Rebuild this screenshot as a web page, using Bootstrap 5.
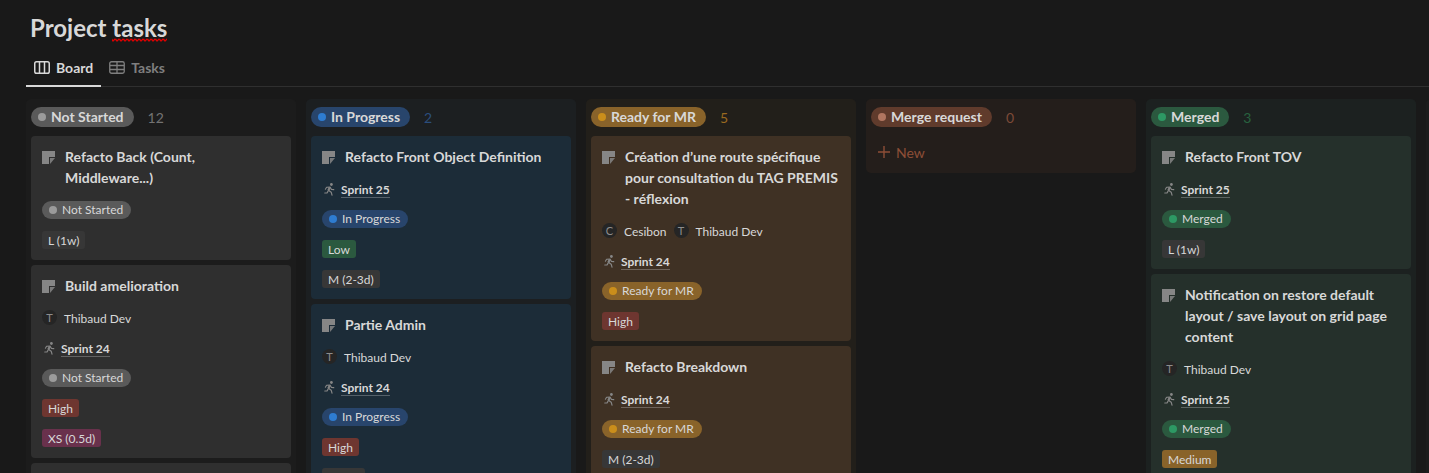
<!DOCTYPE html>
<html lang="en" data-bs-theme="dark">
<head>
<meta charset="utf-8">
<meta name="viewport" content="width=device-width, initial-scale=1">
<title>Project tasks</title>
<link href="https://cdn.jsdelivr.net/npm/bootstrap@5.3.0/dist/css/bootstrap.min.css" rel="stylesheet">
<style>
  body { background: #191919; color: #d8d8d8; font-family: Lato, "Liberation Sans", sans-serif; font-size: 14px; line-height: 21px; height: 100vh; overflow: hidden; }
  h1 { font-size: 24px; line-height: 32px; font-weight: 700; color: #d8d8d8; padding: 12px 30px 0; }
  .typo { background: url("data:image/svg+xml,%3Csvg xmlns='http://www.w3.org/2000/svg' width='4' height='4'%3E%3Cpath d='M-1 0 1 3 3 1 5 3' fill='none' stroke='%23e00000' stroke-width='1.2'/%3E%3C/svg%3E") repeat-x left bottom; }
  .views { margin-left: 26px; height: 43px; border-bottom: 1px solid #2f2f2f; }
  .views .nav-link { display: flex; align-items: center; gap: 6px; height: 43px; padding: 3px 8px 0; color: #7f7f7f; font-weight: 700; }
  .views .nav-link.active { color: #d8d8d8; border-bottom: 2px solid #d8d8d8; padding-top: 5px; }
  .board { padding: 12px 0 0 26px; gap: 10px; overflow: hidden; }
  .lane { flex: 0 0 270px; padding: 8px 5px 5px; border-radius: 5px; background: var(--lane); }
  .lane-head { height: 20px; margin-bottom: 9px; gap: 14px; font-size: 14px; color: var(--num); }
  .lane-head h2 { font-size: 14px; line-height: 20px; font-weight: 700; padding: 0 9px 0 7px; gap: 5px; }
  .status { display: inline-flex; align-items: center; border-radius: 10px; background: var(--pill); color: #d8d8d8; margin: 0; white-space: nowrap; }
  .lane-head .status { padding-right: 10px; }
  .status::before { content: ""; width: 8px; height: 8px; border-radius: 50%; background: var(--dot); }
  .task { background: var(--task); border: 0; border-radius: 4px; padding: 10px 11px 11px; margin-bottom: 5px; gap: 12px; color: #d8d8d8; font-size: 12px; line-height: 18px; align-items: flex-start; }
  .task h3 { display: flex; gap: 10px; font-size: 14px; line-height: 21px; font-weight: 700; margin: 0 0 1px; color: #d8d8d8; }
  .task h3 svg { flex: none; margin-top: 5px; }
  .task .status { padding: 0 8px 0 7px; gap: 5px; height: 18px; line-height: 20px; }
  .label { border-radius: 3px; padding: 0 6px; background: #373737; white-space: nowrap; height: 18px; line-height: 20px; }
  .high { background: #6e3630; } .low { background: #2b593f; } .medium { background: #89632a; } .tiny { background: #69314c; }
  .who { display: flex; height: 18px; line-height: 20px; gap: 7px; align-items: flex-start; }
  .face { width: 15px; height: 15px; margin-top: 1px; border-radius: 50%; background: #252525; color: #8d8d8d; font-size: 11px; line-height: 15px; text-align: center; }
  .sprint { display: flex; align-items: center; height: 18px; padding-left: 2px; gap: 6px; color: #d8d8d8; font-weight: 700; text-decoration: none; }
  .sprint span { line-height: 14px; margin-top: 2px; border-bottom: 1px solid #ffffff40; }
  .new { border: 0; background: none; padding: 0 7px; height: 32px; gap: 6px; display: flex; align-items: center; font-size: 14px; color: #8d4e37; }
  .gray { --lane: #1c1c1c; --task: #2f2f2f; --pill: #5a5a5a; --dot: #9b9b9b; --num: #737373; }
  .blue { --lane: #1c1f21; --task: #1c2c38; --pill: #28456c; --dot: #2e7cd1; --num: #2b4e7d; }
  .gold { --lane: #221f1a; --task: #3f3124; --pill: #89632a; --dot: #ca8e1b; --num: #9a6a20; }
  .rust { --lane: #241e1b; --pill: #603b2c; --dot: #b07660; --num: #7d4a38; }
  .leaf { --lane: #1c2120; --task: #25302b; --pill: #2b593f; --dot: #2d9964; --num: #28623f; }
</style>
</head>
<body>
<svg class="d-none">
  <symbol id="note" viewBox="0 0 13 13"><path fill="#868686" d="M0 0h13v6H7v7H0z"/><path fill="#868686" d="M8 7h5l-5 6z" opacity=".85"/></symbol>
  <symbol id="run" viewBox="0 0 11 13"><circle cx="7.4" cy="1.5" r="1.4" fill="#868686"/><path d="M1.4 6.2 2.6 4.2 6 4l1.4 2.4 2.4.2" fill="none" stroke="#868686" stroke-width="1.1" stroke-linecap="round" stroke-linejoin="round"/><path d="M5.8 4.4 4.4 7.4" stroke="#868686" stroke-width="2.2"/><path d="M4.8 7.4 7.2 9.2l.8 3M4.2 7.8 3.2 9.8.8 10" fill="none" stroke="#868686" stroke-width="1.2" stroke-linecap="round" stroke-linejoin="round"/></symbol>
</svg>
<header>
  <h1 class="m-0">Project <span class="typo">tasks</span></h1>
  <nav class="nav views" aria-label="Views">
    <a class="nav-link active" href="#board" aria-current="page"><svg width="16" height="13" viewBox="0 0 16 13" fill="none" stroke="currentColor" stroke-width="1.5"><rect x=".75" y=".75" width="14.5" height="11.5" rx="1.8"/><path d="M5.5 1v11M10.5 1v11"/></svg>Board</a>
    <a class="nav-link" href="#tasks"><svg width="16" height="13" viewBox="0 0 16 13" fill="none" stroke="currentColor" stroke-width="1.3"><rect x=".75" y=".75" width="14.5" height="11.5" rx="1.8"/><path d="M8 1v11M1 4.5h14M1 8.5h14"/></svg>Tasks</a>
  </nav>
</header>
<main class="board d-flex" id="board">
  <section class="lane gray">
    <div class="lane-head d-flex align-items-center"><h2 class="status">Not Started</h2><span>12</span></div>
    <article class="card task"><h3><svg width="13" height="13"><use href="#note"/></svg>Refacto Back (Count, Middleware...)</h3><span class="status">Not Started</span><span class="label">L (1w)</span></article>
    <article class="card task"><h3><svg width="13" height="13"><use href="#note"/></svg>Build amelioration</h3><div class="who"><span class="face">T</span>Thibaud Dev</div><a class="sprint" href="#s24"><svg width="11" height="13"><use href="#run"/></svg><span>Sprint 24</span></a><span class="status">Not Started</span><span class="label high">High</span><span class="label tiny">XS (0.5d)</span></article>
    <article class="card task"><h3><svg width="13" height="13"><use href="#note"/></svg></h3></article>
  </section>
  <section class="lane blue">
    <div class="lane-head d-flex align-items-center"><h2 class="status">In Progress</h2><span>2</span></div>
    <article class="card task"><h3><svg width="13" height="13"><use href="#note"/></svg>Refacto Front Object Definition</h3><a class="sprint" href="#s25"><svg width="11" height="13"><use href="#run"/></svg><span>Sprint 25</span></a><span class="status">In Progress</span><span class="label low">Low</span><span class="label">M (2-3d)</span></article>
    <article class="card task"><h3><svg width="13" height="13"><use href="#note"/></svg>Partie Admin</h3><div class="who"><span class="face">T</span>Thibaud Dev</div><a class="sprint" href="#s24"><svg width="11" height="13"><use href="#run"/></svg><span>Sprint 24</span></a><span class="status">In Progress</span><span class="label high">High</span><span class="label">L (1w)</span></article>
  </section>
  <section class="lane gold">
    <div class="lane-head d-flex align-items-center"><h2 class="status">Ready for MR</h2><span>5</span></div>
    <article class="card task"><h3><svg width="13" height="13"><use href="#note"/></svg>Création d’une route spécifique pour consultation du TAG PREMIS - réflexion</h3><div class="who"><span class="face">C</span>Cesibon<span class="face">T</span>Thibaud Dev</div><a class="sprint" href="#s24"><svg width="11" height="13"><use href="#run"/></svg><span>Sprint 24</span></a><span class="status">Ready for MR</span><span class="label high">High</span></article>
    <article class="card task"><h3><svg width="13" height="13"><use href="#note"/></svg>Refacto Breakdown</h3><a class="sprint" href="#s24"><svg width="11" height="13"><use href="#run"/></svg><span>Sprint 24</span></a><span class="status">Ready for MR</span><span class="label">M (2-3d)</span></article>
  </section>
  <section class="lane rust align-self-start">
    <div class="lane-head d-flex align-items-center"><h2 class="status">Merge request</h2><span>0</span></div>
    <button class="new" type="button"><svg width="12" height="12" viewBox="0 0 12 12" stroke="currentColor" stroke-width="1.4"><path d="M6 0v12M0 6h12"/></svg>New</button>
  </section>
  <section class="lane leaf">
    <div class="lane-head d-flex align-items-center"><h2 class="status">Merged</h2><span>3</span></div>
    <article class="card task"><h3><svg width="13" height="13"><use href="#note"/></svg>Refacto Front TOV</h3><a class="sprint" href="#s25"><svg width="11" height="13"><use href="#run"/></svg><span>Sprint 25</span></a><span class="status">Merged</span><span class="label">L (1w)</span></article>
    <article class="card task"><h3><svg width="13" height="13"><use href="#note"/></svg>Notification on restore default layout / save layout on grid page content</h3><div class="who"><span class="face">T</span>Thibaud Dev</div><a class="sprint" href="#s25"><svg width="11" height="13"><use href="#run"/></svg><span>Sprint 25</span></a><span class="status">Merged</span><span class="label medium">Medium</span></article>
  </section>
  <section class="lane gray"></section>
</main>
<script src="https://cdn.jsdelivr.net/npm/bootstrap@5.3.0/dist/js/bootstrap.bundle.min.js"></script>
</body>
</html>
